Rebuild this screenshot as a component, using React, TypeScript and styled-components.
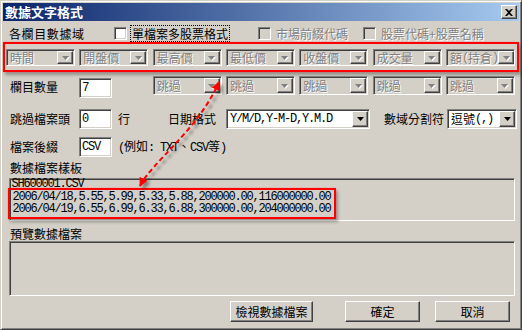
import React from 'react';
import styled, { createGlobalStyle, css } from 'styled-components';

const UI_FONT = `"Noto Sans CJK TC", "Noto Sans CJK SC", sans-serif`;
const MONO_FONT = `"Liberation Mono", "DejaVu Sans Mono", monospace`;

const GlobalStyle = createGlobalStyle`
  html, body {
    margin: 0;
    padding: 0;
    background: #D4D0C8;
  }
`;

const sunken = css`
  border: 1px solid;
  border-color: #808080 #fff #fff #808080;
  box-shadow: inset 1px 1px #404040, inset -1px -1px #D4D0C8;
`;

const raised = css`
  border: 1px solid;
  border-color: #fff #404040 #404040 #fff;
  box-shadow: inset -1px -1px #808080;
`;

const greyed = css`
  color: #808080;
  text-shadow: 1px 1px 0 #fff;
`;

const Window = styled.div`
  position: relative;
  box-sizing: border-box;
  width: 522px;
  height: 330px;
  padding: 2px;
  display: flex;
  flex-direction: column;
  background: #D4D0C8;
  border: 1px solid;
  border-color: #D4D0C8 #404040 #404040 #D4D0C8;
  box-shadow: inset 1px 1px #fff, inset -1px -1px #808080;
  font-family: ${UI_FONT};
  font-size: 12px;
  line-height: 14px;
  color: #000;
`;

const TitleBar = styled.div`
  height: 18px;
  flex-shrink: 0;
  display: flex;
  align-items: center;
  justify-content: space-between;
  padding: 0 2px;
  background: linear-gradient(to right, #0A246A, #A6CAF0);
`;

const TitleText = styled.span`
  color: #fff;
  font-weight: bold;
  font-size: 13px;
  line-height: 18px;
`;

const CloseButton = styled.div`
  box-sizing: border-box;
  width: 16px;
  height: 14px;
  display: flex;
  align-items: center;
  justify-content: center;
  background: #D4D0C8;
  ${raised}
`;

const Ascii = styled.span`
  font-family: ${MONO_FONT};
  font-size: 12px;
  letter-spacing: -1.2px;
`;

/* row 1: the field options */
const TopRow = styled.div`
  display: flex;
  align-items: center;
  height: 15px;
  margin-top: 5px;
`;

const RowLabel = styled.span<{ $width: number }>`
  box-sizing: border-box;
  width: ${p => p.$width}px;
  padding-left: 6px;
  letter-spacing: 0.6px;
  white-space: nowrap;
`;

const CheckOption = styled.label<{ $width?: number; $disabled?: boolean }>`
  display: flex;
  align-items: center;
  gap: 4px;
  width: ${p => (p.$width ? `${p.$width}px` : 'auto')};
  white-space: nowrap;
  ${p => p.$disabled && greyed}
`;

const CheckBox = styled.span<{ $disabled?: boolean }>`
  box-sizing: border-box;
  width: 13px;
  height: 13px;
  flex-shrink: 0;
  background: ${p => (p.$disabled ? '#D4D0C8' : '#fff')};
  ${sunken}
`;

const OptionText = styled.span<{ $focused?: boolean }>`
  padding: 0 1px;
  line-height: 15px;
  outline: ${p => (p.$focused ? '1px dotted #000' : 'none')};
`;

/* red highlighted row of column combos */
const ColumnsHighlight = styled.div`
  margin-top: 1px;
  padding: 5px 1px 4px;
  border: 2px solid #f00;
  box-shadow: 0 0 1px #ff6060, 2px 3px 3px rgba(0, 0, 0, 0.3);
`;

const ColumnGrid = styled.div`
  display: grid;
  grid-template-columns: repeat(7, 69px);
  column-gap: 4.33px;
  align-items: start;
`;

const SkipRow = styled(ColumnGrid)`
  margin-top: 4px;
  padding-left: 3px;
  height: 22px;
`;

const GridLabel = styled.span`
  padding-left: 4px;
  align-self: center;
  white-space: nowrap;
`;

const ComboFrame = styled.div<{ $disabled?: boolean; $height: number; $width?: number; $space: number }>`
  box-sizing: border-box;
  display: flex;
  height: ${p => p.$height}px;
  width: ${p => (p.$width ? `${p.$width}px` : 'auto')};
  margin-left: ${p => p.$space}px;
  flex-shrink: 0;
  padding: 1px;
  background: ${p => (p.$disabled ? '#D4D0C8' : '#fff')};
  ${sunken}
`;

const ComboText = styled.span<{ $disabled?: boolean }>`
  flex: 1;
  display: flex;
  align-items: center;
  padding-left: 2px;
  line-height: 12px;
  white-space: nowrap;
  ${p => p.$disabled && greyed}
`;

const DropButton = styled.span`
  box-sizing: border-box;
  width: 16px;
  flex-shrink: 0;
  display: flex;
  align-items: center;
  justify-content: center;
  background: #D4D0C8;
  ${raised}
`;

const DropArrow = styled.svg<{ $disabled?: boolean }>`
  display: block;
  fill: ${p => (p.$disabled ? '#808080' : '#000')};
  filter: ${p => (p.$disabled ? 'drop-shadow(1px 1px 0 #fff)' : 'none')};
`;

type ComboProps = {
  children: React.ReactNode;
  disabled?: boolean;
  height?: number;
  width?: number;
  space?: number;
};

function Combo({ children, disabled, height = 18, width, space = 0 }: ComboProps) {
  return (
    <ComboFrame $disabled={disabled} $height={height} $width={width} $space={space}>
      <ComboText $disabled={disabled}>{children}</ComboText>
      <DropButton>
        <DropArrow $disabled={disabled} width="7" height="4" viewBox="0 0 7 4">
          <path d="M0 0h7L3.5 4z" />
        </DropArrow>
      </DropButton>
    </ComboFrame>
  );
}

const TextBox = styled.div<{ $offset?: number }>`
  box-sizing: border-box;
  width: 33px;
  height: 20px;
  margin-top: ${p => p.$offset ?? 0}px;
  padding: 0 2px;
  display: flex;
  align-items: center;
  background: #fff;
  ${sunken}
`;

/* rows 4 and 5 */
const FormRow = styled.div<{ $gap: number }>`
  display: flex;
  align-items: center;
  height: 20px;
  margin-top: ${p => p.$gap}px;
  padding-left: 7px;
`;

const FormLabel = styled.span<{ $width?: number; $space?: number }>`
  width: ${p => (p.$width ? `${p.$width}px` : 'auto')};
  margin-left: ${p => p.$space ?? 0}px;
  white-space: nowrap;
`;

/* sample and preview areas */
const SectionLabel = styled.div<{ $gap: number }>`
  margin-top: ${p => p.$gap}px;
  padding-left: 7px;
  height: 15px;
  line-height: 15px;
`;

const StaticBox = styled.div<{ $height: number; $gap: number }>`
  box-sizing: border-box;
  height: ${p => p.$height}px;
  margin: ${p => p.$gap}px 4px 0 6px;
  padding: 0 0 0 1.5px;
  ${sunken}
`;

const SampleLine = styled.div<{ $tight?: boolean }>`
  font-family: ${MONO_FONT};
  font-size: 12px;
  letter-spacing: -1.2px;
  line-height: ${p => (p.$tight ? 11 : 12)}px;
  white-space: nowrap;
`;

const SampleHighlight = styled.div`
  width: fit-content;
  margin: -2px 0 0 -4px;
  padding: 1px 3px 2px;
  border: 2px solid #f00;
  box-shadow: 0 0 1px #ff6060, 2px 3px 3px rgba(0, 0, 0, 0.3);
`;

const ButtonRow = styled.div`
  display: flex;
  justify-content: flex-end;
  margin-top: 5px;
  padding-right: 9px;
`;

const PushButton = styled.button<{ $width: number; $space: number }>`
  box-sizing: border-box;
  width: ${p => p.$width}px;
  height: 21px;
  margin-left: ${p => p.$space}px;
  padding: 0;
  background: #D4D0C8;
  font-family: ${UI_FONT};
  font-size: 12px;
  line-height: 14px;
  color: #000;
  ${raised}
`;

const ArrowLayer = styled.svg`
  position: absolute;
  left: -1px;
  top: -1px;
  pointer-events: none;
`;

function LinkArrow() {
  return (
    <ArrowLayer width="522" height="330" viewBox="0 0 522 330">
      <defs>
        <filter id="arrowShadow" x="-20%" y="-20%" width="140%" height="140%">
          <feDropShadow dx="3" dy="3" stdDeviation="1.5" floodColor="#000" floodOpacity="0.4" />
        </filter>
        <marker
          id="arrowHead"
          viewBox="0 0 10 10"
          refX="9"
          refY="5"
          markerWidth="9"
          markerHeight="9"
          markerUnits="userSpaceOnUse"
          orient="auto-start-reverse"
        >
          <path d="M0 0L10 5L0 10z" fill="#f00" />
        </marker>
      </defs>
      <path
        d="M140 186C152 162 198 130 219 82"
        fill="none"
        stroke="#f00"
        strokeWidth="2"
        strokeDasharray="5 3"
        markerStart="url(#arrowHead)"
        markerEnd="url(#arrowHead)"
        filter="url(#arrowShadow)"
      />
    </ArrowLayer>
  );
}

const columns: React.ReactNode[] = [
  '時間',
  '開盤價',
  '最高價',
  '最低價',
  '收盤價',
  '成交量',
  <>額<Ascii>(</Ascii>持倉<Ascii>)</Ascii></>,
];

export default function App() {
  return (
    <>
      <GlobalStyle />
      <Window>
        <TitleBar>
          <TitleText>數據文字格式</TitleText>
          <CloseButton>
            <svg width="8" height="7" viewBox="0 0 8 7">
              <path d="M0 0h2l2 2 2-2h2L5 3.5 8 7H6L4 5 2 7H0l3-3.5z" fill="#000" />
            </svg>
          </CloseButton>
        </TitleBar>

        <TopRow>
          <RowLabel $width={111}>各欄目數據域</RowLabel>
          <CheckOption $width={144}>
            <CheckBox />
            <OptionText $focused>單檔案多股票格式</OptionText>
          </CheckOption>
          <CheckOption $width={105} $disabled>
            <CheckBox $disabled />
            <OptionText>市場前綴代碼</OptionText>
          </CheckOption>
          <CheckOption $disabled>
            <CheckBox $disabled />
            <OptionText>股票代碼+股票名稱</OptionText>
          </CheckOption>
        </TopRow>

        <ColumnsHighlight>
          <ColumnGrid>
            {columns.map((c, i) => (
              <Combo key={i} disabled height={17}>{c}</Combo>
            ))}
          </ColumnGrid>
        </ColumnsHighlight>

        <SkipRow>
          <GridLabel>欄目數量</GridLabel>
          <TextBox $offset={2}><Ascii>7</Ascii></TextBox>
          {[0, 1, 2, 3, 4].map(i => (
            <Combo key={i} disabled height={19}>跳過</Combo>
          ))}
        </SkipRow>

        <FormRow $gap={11}>
          <FormLabel $width={69}>跳過檔案頭</FormLabel>
          <TextBox><Ascii>0</Ascii></TextBox>
          <FormLabel $space={6}>行</FormLabel>
          <FormLabel $space={38}>日期格式</FormLabel>
          <Combo height={20} width={144} space={10}>
            <Ascii>Y/M/D,Y-M-D,Y.M.D</Ascii>
          </Combo>
          <FormLabel $space={14}>數域分割符</FormLabel>
          <Combo height={20} width={70} space={3}>
            逗號<Ascii>(,)</Ascii>
          </Combo>
        </FormRow>

        <FormRow $gap={8}>
          <FormLabel $width={69}>檔案後綴</FormLabel>
          <TextBox><Ascii>CSV</Ascii></TextBox>
          <FormLabel $space={6}>
            <Ascii>(</Ascii>例如<Ascii>: TXT</Ascii>、<Ascii>CSV</Ascii>等<Ascii>)</Ascii>
          </FormLabel>
        </FormRow>

        <SectionLabel $gap={3}>數據檔案樣板</SectionLabel>
        <StaticBox $height={43} $gap={3}>
          <SampleLine $tight>SH600001.CSV</SampleLine>
          <SampleHighlight>
            <SampleLine>2006/04/18,5.55,5.99,5.33,5.88,200000.00,116000000.00</SampleLine>
            <SampleLine>2006/04/19,6.55,6.99,6.33,6.88,300000.00,204000000.00</SampleLine>
          </SampleHighlight>
        </StaticBox>

        <SectionLabel $gap={5}>預覽數據檔案</SectionLabel>
        <StaticBox $height={55} $gap={0} />

        <ButtonRow>
          <PushButton $width={83} $space={0}>檢視數據檔案</PushButton>
          <PushButton $width={75} $space={32}>確定</PushButton>
          <PushButton $width={75} $space={15}>取消</PushButton>
        </ButtonRow>

        <LinkArrow />
      </Window>
    </>
  );
}
